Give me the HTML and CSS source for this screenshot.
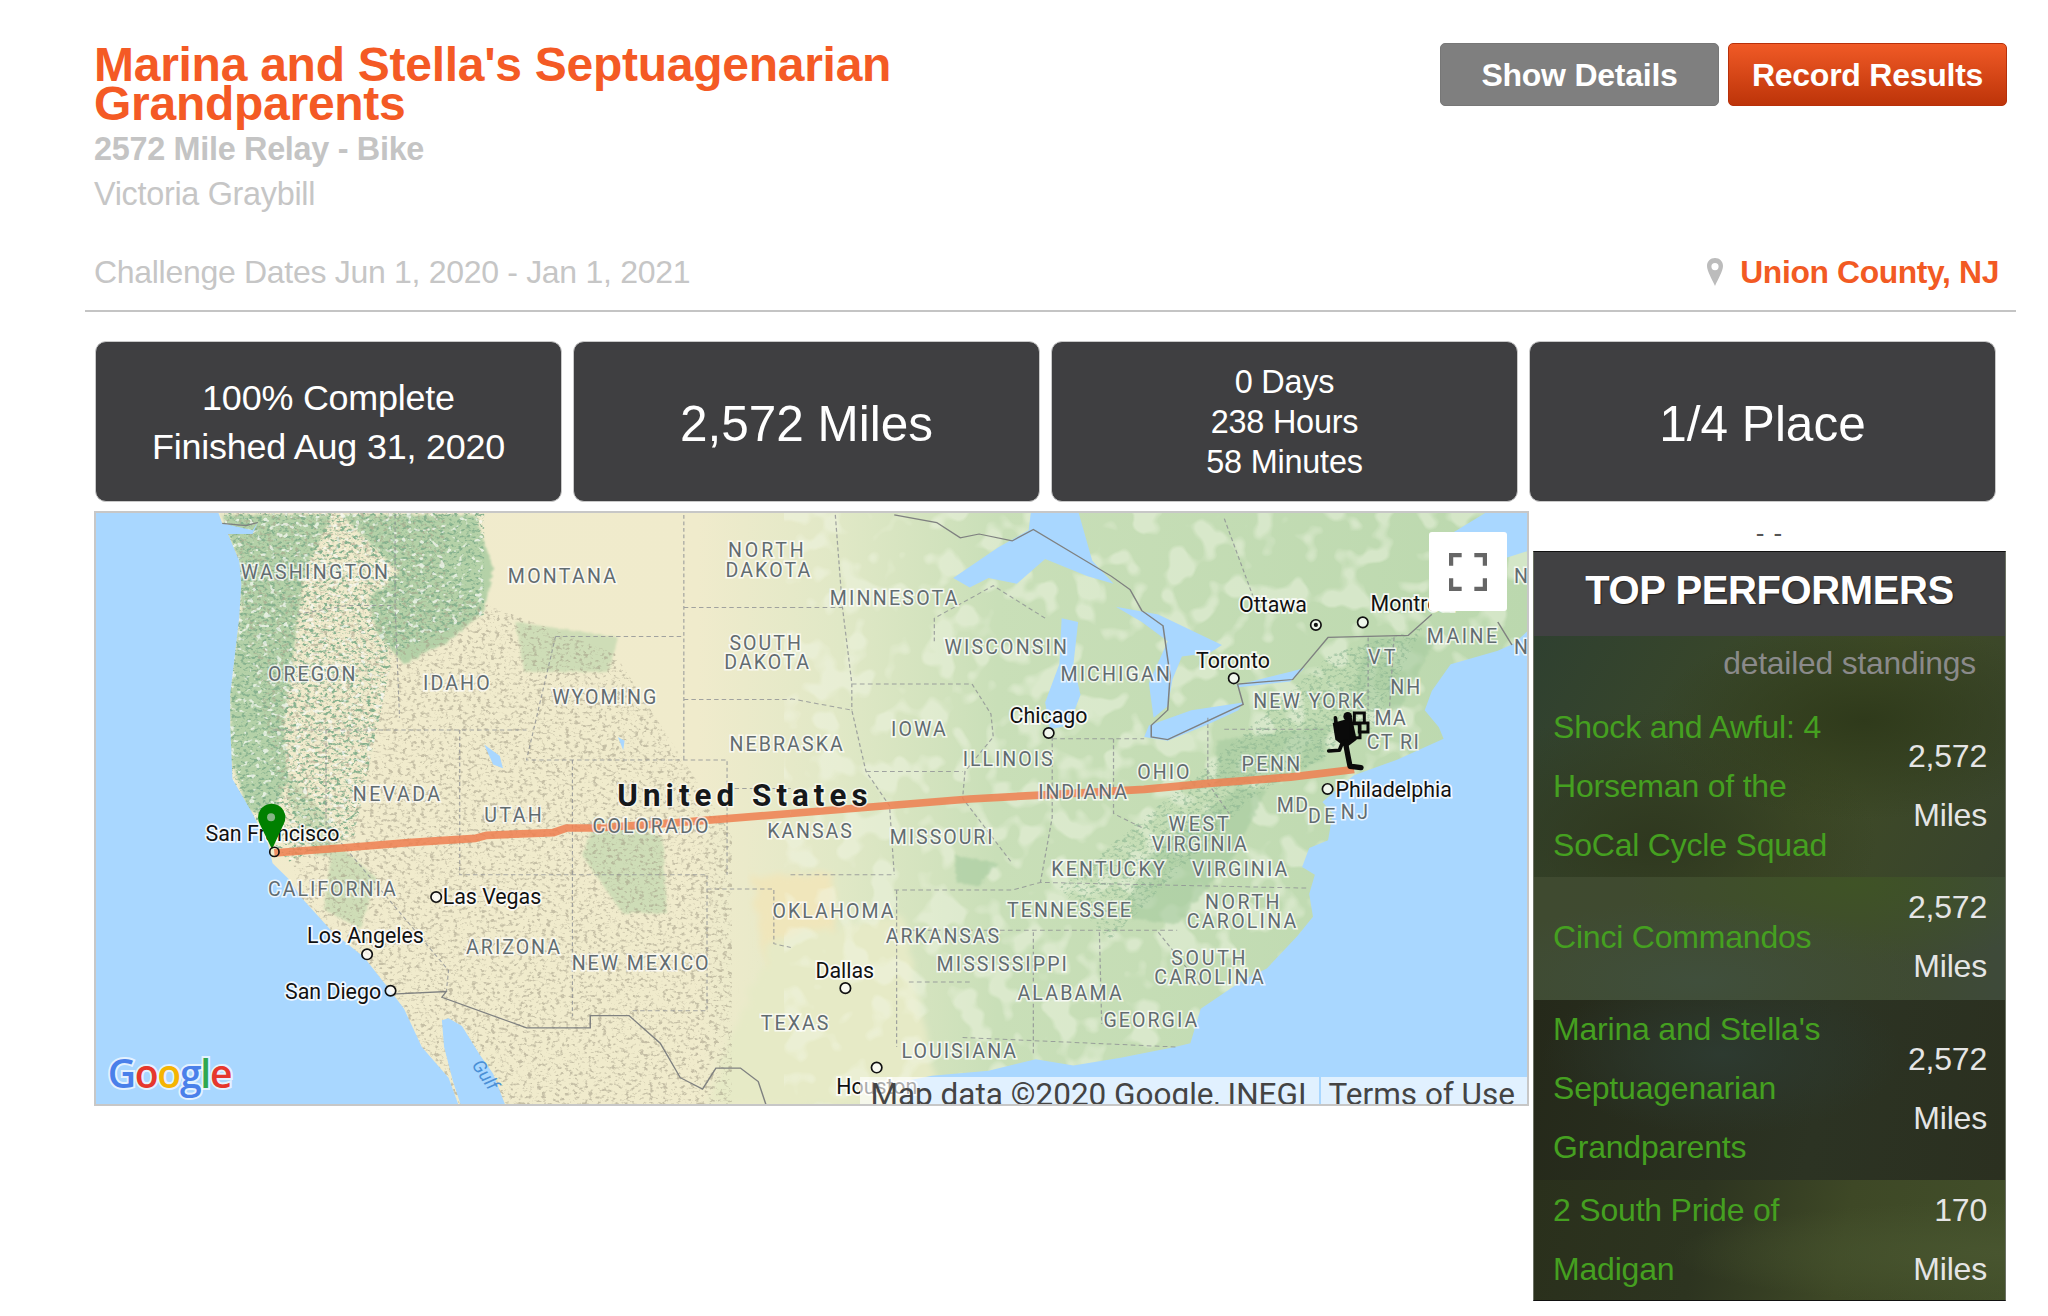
FILE: index.html
```html
<!DOCTYPE html>
<html lang="en">
<head>
<meta charset="utf-8">
<title>Marina and Stella's Septuagenarian Grandparents</title>
<link rel="stylesheet" href="styles.css">
</head>
<body>
<div class="page">
  <header class="head">
    <div class="head-text">
      <h1 class="title">Marina and Stella's Septuagenarian Grandparents</h1>
      <h2 class="subtitle">2572 Mile Relay - Bike</h2>
      <p class="captain">Victoria Graybill</p>
    </div>
    <div class="actions">
      <a class="btn btn-grey">Show Details</a>
      <a class="btn btn-orange">Record Results</a>
    </div>
  </header>
  <div class="dates">
    <span>Challenge Dates Jun 1, 2020 - Jan 1, 2021</span>
    <span class="place">
      <svg class="place-pin" viewBox="0 0 16 28" aria-hidden="true"><path fill-rule="evenodd" d="M8 0C3.4 0 0 3.5 0 8c0 5 5 13 8 20 3-7 8-15 8-20 0-4.500-3.400-8-8-8zm0 5a3.600 3.600 0 1 1 0 7.200A3.600 3.600 0 0 1 8 5z"/></svg>
      <span>Union County, NJ</span>
    </span>
  </div>
  <section class="stats">
    <div class="stat stat-m">100% Complete<br>Finished Aug 31, 2020</div>
    <div class="stat stat-l">2,572 Miles</div>
    <div class="stat stat-s">0 Days<br>238 Hours<br>58 Minutes</div>
    <div class="stat stat-l">1/4 Place</div>
  </section>
  <section class="main">
    <div class="map">
      <svg class="map-svg" viewBox="72 392 1098 454" preserveAspectRatio="none" aria-label="Route map">
        <defs>
          <linearGradient id="land" gradientUnits="userSpaceOnUse" x1="72" y1="0" x2="1170" y2="0">
            <stop offset="0" stop-color="#f1ebcd"/>
            <stop offset=".42" stop-color="#f0ebcc"/>
            <stop offset=".52" stop-color="#e0e8c6"/>
            <stop offset=".63" stop-color="#c9dfb8"/>
            <stop offset="1" stop-color="#bbd8ae"/>
          </linearGradient>
          <filter id="rough" x="-5%" y="-5%" width="110%" height="110%">
            <feTurbulence type="fractalNoise" baseFrequency=".09" numOctaves="3" seed="4" result="n"/>
            <feDisplacementMap in="SourceGraphic" in2="n" scale="12" result="d"/>
            <feGaussianBlur in="d" stdDeviation="2.500"/>
          </filter>
          <filter id="ridge" x="0" y="0" width="100%" height="100%">
            <feTurbulence type="fractalNoise" baseFrequency=".28 .4" numOctaves="3" seed="9"/>
            <feColorMatrix values="0 0 0 0 .36  0 0 0 0 .33  0 0 0 0 .24  0 0 0 -5 2.350"/>
          </filter>
          <filter id="ridge-green" x="0" y="0" width="100%" height="100%">
            <feTurbulence type="fractalNoise" baseFrequency=".3 .42" numOctaves="3" seed="12"/>
            <feColorMatrix values="0 0 0 0 .24  0 0 0 0 .44  0 0 0 0 .27  0 0 0 -5 2.450"/>
          </filter>
          <filter id="snow" x="0" y="0" width="100%" height="100%">
            <feTurbulence type="fractalNoise" baseFrequency=".2 .26" numOctaves="2" seed="31"/>
            <feColorMatrix values="0 0 0 0 .96  0 0 0 0 .97  0 0 0 0 .93  0 0 0 -9 3.500"/>
          </filter>
          <filter id="blotch" x="0" y="0" width="100%" height="100%">
            <feTurbulence type="fractalNoise" baseFrequency=".045" numOctaves="2" seed="21"/>
            <feColorMatrix values="0 0 0 0 .89  0 0 0 0 .93  0 0 0 0 .79  0 0 0 -9 4.300"/>
          </filter>
          <clipPath id="west"><path d="M170 392H340L340 450 470 500 560 640 560 846H260Z"/></clipPath>
          <clipPath id="north"><path d="M170 392H370V470L300 500 270 640 220 660 170 600Z"/></clipPath>
          <clipPath id="appal"><path d="M850 720 960 610 1050 560 1090 480 1020 500 920 590 810 680Z"/></clipPath>
        </defs>

        <rect class="land" x="72" y="392" width="1098" height="454"/>
        <path class="patch-beige" d="M575 670H640L628 790 590 770Z" filter="url(#rough)"/>
        <path class="patch-mid" d="M540 846 590 720 690 700 720 846Z" filter="url(#rough)"/>
        <rect class="blotch" x="600" y="392" width="570" height="454" filter="url(#blotch)"/>

        <g transform="translate(69 390.500) scale(.3419 .2941)">
          <g class="forest" filter="url(#rough)">
            <path d="M290 10H540L480 150 460 300 430 560 440 700 400 800 350 780 310 640 310 480 335 250 330 130Z"/>
            <path d="M560 10H860L900 150 880 260 800 340 700 400 640 320 620 230 690 160Z"/>
          </g>
          <g class="forest-light" filter="url(#rough)">
            <path d="M950 290 1180 330 1160 420 970 420Z"/>
            <path d="M1130 800 1280 850 1290 1050 1190 1050 1100 900Z"/>
            <path d="M440 690 530 800 540 900 500 900 440 760Z"/>
            <path d="M540 860 640 960 600 1090 520 1040Z"/>
          </g>
        </g>
        <g transform="translate(604.900 390.500) scale(.3618 .2941)">
          <g class="forest-east" filter="url(#rough)">
            <path d="M905 600 1140 560 1130 650 1030 700 900 720Z"/>
            <path d="M700 1060 760 900 950 720 1010 730 940 900 820 1080Z"/>
            <path d="M1225 330 1370 330 1290 520 1180 520Z"/>
            <path d="M350 900 440 920 400 980 350 970Z"/>
          </g>
        </g>
        <rect class="ridge" x="72" y="392" width="1098" height="454" clip-path="url(#west)" filter="url(#ridge)"/>
        <rect class="ridge-strong" x="72" y="392" width="1098" height="454" clip-path="url(#north)" filter="url(#ridge-green)"/>
        <rect class="ridge-snow" x="72" y="392" width="1098" height="454" clip-path="url(#north)" filter="url(#snow)"/>
        <rect class="ridge" x="72" y="392" width="1098" height="454" clip-path="url(#appal)" filter="url(#ridge-green)"/>

        <g class="water" transform="translate(69 390.500) scale(.3419 .2941)">
          <path d="M0 0H282L292 32 360 50 372 30 360 60 305 60 330 130 335 190 330 280 310 480 310 560 315 700 360 790 395 870 405 920 440 960 470 1010 540 1100 610 1165 672 1257 700 1300 740 1400 800 1480 825 1560H0Z"/>
          <path d="M785 1330 800 1325 830 1345 870 1420 900 1470 930 1560H830L810 1490 790 1400Z"/>
          <path d="M880 610 915 640 922 672 900 662Z"/>
          <path d="M1180 590 1195 600 1192 625Z"/>
        </g>
        <g class="water" transform="translate(604.900 390.500) scale(.3618 .2941)">
          <path d="M230 1560 240 1490 300 1475 420 1462 520 1432 600 1448 700 1428 815 1400 848 1390 870 1300 960 1225 1010 1195 1075 1110 1108 1060 1100 1000 1112 950 1085 930 1100 880 1140 860 1150 790 1128 760 1165 720 1195 690 1285 650 1385 595 1375 565 1345 520 1360 470 1400 400 1500 365 1535 345 1575 300V1560Z"/>
          <path d="M345 175 440 95 505 50 510 0H610L640 130 685 190 630 170 540 125 480 190 420 175 380 200Z"/>
          <path d="M575 280 610 290 600 400 615 480 590 560 550 570 540 500 570 400Z"/>
          <path d="M690 250 780 270 915 350 890 370 830 380 810 440 800 510 770 540 760 450 800 340 745 290Z"/>
          <path d="M760 560 850 520 960 500 950 520 880 560 800 600 750 590Z"/>
          <path d="M945 455 1060 420 1090 410 1060 445 950 460Z"/>
          <path d="M1400 60 1480 0H1575V100L1510 125Z"/>
        </g>

        <g class="state-lines" transform="translate(69 390.500) scale(.3419 .2941)">
          <path d="M1328 10V650M1328 252H1568M1328 492H1568M1040 328H1328M1040 328 975 650H1425V950M1425 725H1568M405 572H975M825 572V950H1380V1305H1205M1078 650V1320M1380 987H1530V1130L1568 1140M525 572V820L800 1200 795 1255M460 270 570 247H680M680 10V250L690 540"/>
        </g>
        <g class="state-lines" transform="translate(604.900 390.500) scale(.3618 .2941)">
          <path d="M95 10 110 250 130 450V520M0 252H110M130 452H385L425 530 430 590 370 680 365 750 470 920M160 680H365M0 490 130 520 160 680 210 770 220 950M0 950H220M220 990H470L530 970 1100 985M555 590V800L530 970M685 595V790L750 830M555 595H750M885 540V710L930 790M920 570H1130M240 1095H820M225 990V1400M380 1230H250M365 1375 820 1400M515 1100V1420M655 1100 660 1340M305 340V280L430 195 540 280M780 1100 870 1240M1225 330V520M1280 330 1270 520M920 20 980 220"/>
        </g>
        <g class="country-lines" transform="translate(69 390.500) scale(.3419 .2941)">
          <path d="M672 1262 795 1255 785 1270 975 1350H1118V1318H1205L1275 1390 1320 1480 1370 1510 1400 1455H1455L1495 1490 1515 1560"/>
          <path d="M292 32 345 38 372 30"/>
        </g>
        <g class="country-lines" transform="translate(604.900 390.500) scale(.3618 .2941)">
          <path d="M220 10 310 30 360 70 400 60 470 78 515 48 680 170 720 205 745 260 790 300 805 430 800 520 765 560V590L800 597 885 548 960 505 948 452 1065 440 1140 330 1310 325 1360 270M1500 290 1530 350"/>
        </g>

        <g transform="translate(69 390.500) scale(.3419 .2941)">
          <path class="route" d="M409 893 560 880 710 866 860 855 885 847 1035 840 1065 828H1130L1300 815 1568 790"/>
        </g>
        <g transform="translate(604.900 390.500) scale(.3618 .2941)">
          <path class="route" d="M0 790 150 775 380 752 560 740 750 727 880 712 1060 695 1195 675"/>
        </g>

        <g class="states">
          <text x="183" y="443" textLength="113">WASHINGTON</text>
          <text x="388" y="446" textLength="83">MONTANA</text>
          <text x="557" y="426" textLength="58">NORTH</text>
          <text x="555" y="441" textLength="65">DAKOTA</text>
          <text x="635" y="463" textLength="98">MINNESOTA</text>
          <text x="1160" y="446">N</text>
          <text x="1160" y="500">N</text>
          <text x="1093" y="492" textLength="54">MAINE</text>
          <text x="1048" y="508" textLength="21">VT</text>
          <text x="723" y="500" textLength="94">WISCONSIN</text>
          <text x="204" y="521" textLength="67">OREGON</text>
          <text x="323" y="528" textLength="51">IDAHO</text>
          <text x="422" y="539" textLength="80">WYOMING</text>
          <text x="558" y="497" textLength="55">SOUTH</text>
          <text x="554" y="512" textLength="65">DAKOTA</text>
          <text x="812" y="521" textLength="84">MICHIGAN</text>
          <text x="1065" y="531" textLength="23">NH</text>
          <text x="960" y="542" textLength="85">NEW YORK</text>
          <text x="1053" y="555" textLength="24">MA</text>
          <text x="1047" y="573" textLength="40">CT RI</text>
          <text x="682" y="563" textLength="42">IOWA</text>
          <text x="558" y="575" textLength="87">NEBRASKA</text>
          <text x="737" y="586" textLength="69">ILLINOIS</text>
          <text x="871" y="596" textLength="40">OHIO</text>
          <text x="951" y="590" textLength="45">PENN</text>
          <text x="795" y="612" textLength="68">INDIANA</text>
          <text x="269" y="613" textLength="67">NEVADA</text>
          <text x="370" y="629" textLength="44">UTAH</text>
          <text x="453" y="638" textLength="89">COLORADO</text>
          <text x="587" y="642" textLength="65">KANSAS</text>
          <text x="978" y="622" textLength="24">MD</text>
          <text x="1002" y="630" textLength="21">DE</text>
          <text x="1027" y="627" textLength="21">NJ</text>
          <text x="895" y="636" textLength="46">WEST</text>
          <text x="882" y="652" textLength="73">VIRGINIA</text>
          <text x="681" y="646" textLength="79">MISSOURI</text>
          <text x="805" y="671" textLength="87">KENTUCKY</text>
          <text x="913" y="671" textLength="73">VIRGINIA</text>
          <text x="204" y="686" textLength="98">CALIFORNIA</text>
          <text x="591" y="703" textLength="93">OKLAHOMA</text>
          <text x="771" y="702" textLength="95">TENNESSEE</text>
          <text x="923" y="696" textLength="57">NORTH</text>
          <text x="909" y="711" textLength="84">CAROLINA</text>
          <text x="678" y="722" textLength="87">ARKANSAS</text>
          <text x="356" y="731" textLength="72">ARIZONA</text>
          <text x="897" y="739" textLength="57">SOUTH</text>
          <text x="884" y="754" textLength="84">CAROLINA</text>
          <text x="437" y="743" textLength="105">NEW MEXICO</text>
          <text x="717" y="744" textLength="100">MISSISSIPPI</text>
          <text x="779" y="766" textLength="80">ALABAMA</text>
          <text x="582" y="789" textLength="52">TEXAS</text>
          <text x="845" y="787" textLength="72">GEORGIA</text>
          <text x="690" y="811" textLength="88">LOUISIANA</text>
        </g>
        <text class="country" x="472" y="617" textLength="192">United States</text>
        <text class="gulf" transform="translate(360 816) rotate(56)">Gulf</text>

        <g class="cities">
          <text x="949" y="468">Ottawa</text>
          <text x="1050" y="467">Montréal</text>
          <text x="916" y="511">Toronto</text>
          <text x="773" y="553">Chicago</text>
          <text x="1023" y="610">Philadelphia</text>
          <text x="156" y="644">San Francisco</text>
          <text x="338" y="692">Las Vegas</text>
          <text x="234" y="722">Los Angeles</text>
          <text x="217" y="765">San Diego</text>
          <text x="624" y="749">Dallas</text>
          <text x="640" y="838">Houston</text>
        </g>
        <g class="dots">
          <circle cx="1008" cy="478" r="4"/><circle class="dot-core" cx="1008" cy="478" r="1.600"/>
          <circle cx="1044" cy="476" r="4"/>
          <circle cx="945" cy="519" r="4"/>
          <circle cx="803" cy="561" r="4"/>
          <circle cx="1017" cy="604" r="4"/>
          <circle cx="333" cy="687" r="4"/>
          <circle cx="280" cy="731" r="4"/>
          <circle cx="298" cy="759" r="4"/>
          <circle cx="647" cy="757" r="4"/>
          <circle cx="671" cy="818" r="4"/>
        </g>

        <g transform="translate(68 597.200) scale(.2552)">
          <path class="pin" d="M545 208 508 132A41 41 0 1 1 580 132Z"/>
          <circle class="pin-hole" cx="542" cy="112" r="12"/>
          <circle class="sf-dot" cx="552" cy="216" r="14"/>
        </g>
        <g class="runner" transform="translate(980.100 520.700) scale(.2552)">
          <circle cx="205" cy="108" r="13"/>
          <path d="M160 128 218 112 232 178 200 202 168 178Z"/>
          <path class="runner-limb" d="M198 185 206 228 212 258 245 262"/>
          <path class="runner-limb thin" d="M190 185 180 210 148 212"/>
          <path class="runner-limb thin" d="M172 145 168 112"/>
          <path class="runner-box" d="M225 98H255V128H225ZM240 128H266V155H240ZM215 130H242V172H215Z"/>
        </g>

        <text class="google" x="81" y="834"><tspan class="g-blue">G</tspan><tspan class="g-red">o</tspan><tspan class="g-yellow">o</tspan><tspan class="g-blue">g</tspan><tspan class="g-green">l</tspan><tspan class="g-red">e</tspan></text>
      </svg>
      <button class="fullscreen" aria-label="Toggle fullscreen">
        <svg viewBox="0 0 36 36" aria-hidden="true"><path d="M2 12V2H12M24 2H34V12M34 24V34H24M12 34H2V24"/></svg>
      </button>
      <div class="attrib">
        <span class="attrib-cell">Map data ©2020 Google, INEGI</span>
        <span class="attrib-cell attrib-terms">Terms of Use</span>
      </div>
    </div>
    <aside class="side">
      <div class="dash">- -</div>
      <div class="panel">
        <h3 class="panel-title">TOP PERFORMERS</h3>
        <div class="lead">
          <a class="standings">detailed standings</a>
          <div class="row">
            <a class="team">Shock and Awful: 4 Horseman of the SoCal Cycle Squad</a>
            <span class="dist">2,572 Miles</span>
          </div>
        </div>
        <div class="row row-2">
          <a class="team">Cinci Commandos</a>
          <span class="dist">2,572 Miles</span>
        </div>
        <div class="row row-3">
          <a class="team">Marina and Stella's Septuagenarian Grandparents</a>
          <span class="dist">2,572 Miles</span>
        </div>
        <div class="row row-4">
          <a class="team">2 South Pride of Madigan</a>
          <span class="dist">170 Miles</span>
        </div>
      </div>
    </aside>
  </section>
</div>
</body>
</html>
```
FILE: styles.css
```css
* { box-sizing: border-box; }
html, body { margin: 0; padding: 0; background: #fff; }
body { font-family: "Liberation Sans", Arial, sans-serif; height: 1316px; overflow: hidden; }
.page { width: 1931px; margin-left: 85px; }

.head { display: flex; justify-content: space-between; padding-left: 9px; height: 220px; }
.head-text { width: 830px; padding-top: 45px; }
.title { margin: 0; font-size: 48px; line-height: 39px; font-weight: 700; color: #f45a25; letter-spacing: -.27px; }
.subtitle { margin: 6px 0 0; font-size: 32.400px; line-height: 40px; font-weight: 700; color: #c4c4c4; letter-spacing: -.3px; }
.captain { margin: 5px 0 0; font-size: 32.400px; line-height: 40px; color: #c6c6c6; letter-spacing: -.3px; }
.actions { display: flex; gap: 9px; padding-top: 43px; margin-right: 9px; }
.btn { display: flex; align-items: center; justify-content: center; width: 279px; height: 63px; padding-top: 2px; border-radius: 5px; color: #fff; font-size: 32px; font-weight: 700; letter-spacing: -.25px; }
.btn-grey { background: #7f7f7f; border: 1px solid #777; }
.btn-orange { background: linear-gradient(#f05a26, #bd3409); border: 1px solid #b8300a; }

.dates { display: flex; justify-content: space-between; align-items: center; height: 92px; padding: 14px 17px 0 9px; border-bottom: 2px solid #c4c4c4; color: #c6c6c6; font-size: 32px; letter-spacing: -.3px; }
.place { display: flex; align-items: center; gap: 17px; color: #f25a23; font-weight: 700; font-size: 31.800px; letter-spacing: -.35px; }
.place-pin { width: 16px; height: 28px; fill: #bcbcbc; }

.stats { display: grid; grid-template-columns: repeat(4, 467px); column-gap: 11px; margin: 29px 0 0 10px; width: 1900px; }
.stat { height: 161px; display: flex; align-items: center; justify-content: center; text-align: center; background: #3f3f41; border: 1px solid #c9c9c9; border-radius: 11px; color: #fff; }
.stat-m { font-size: 35.900px; line-height: 49px; padding-top: 2px; letter-spacing: -.2px; }
.stat-l { font-size: 49.500px; padding-top: 3px; }
.stat-s { font-size: 32.400px; line-height: 40px; padding-top: 1px; letter-spacing: -.2px; }

.main { display: flex; align-items: flex-start; margin: 9px 0 0 9px; }
.map { position: relative; width: 1435px; height: 595px; flex: none; border: 2px solid #c7c7c7; overflow: hidden; background: #aad6ff; }
.map-svg { display: block; width: 100%; height: 100%; }

.land { fill: url(#land); }
.patch-beige { fill: #f0e6bb; }
.patch-mid { fill: #e6eac6; }
.blotch { opacity: .45; }
.forest { opacity: .8; }
.forest path { fill: #a6cb9f; }
.forest-east { opacity: .6; }
.forest-east path { fill: #a6cb9f; }
.forest-light { opacity: .55; }
.forest-light path { fill: #b4d2a6; }
.ridge { opacity: .55; }
.ridge-strong { opacity: 1; }
.ridge-snow { opacity: .7; }
.water { fill: #a9d7ff; }
.state-lines path { fill: none; stroke: #8d9093; stroke-width: 2.600; stroke-dasharray: 10 7; opacity: .8; }
.country-lines path { fill: none; stroke: #7f8180; stroke-width: 3.200; }
.route { fill: none; stroke: #ef7f50; stroke-opacity: .85; stroke-width: 20; stroke-linejoin: round; }

.states text { font-family: Roboto, sans-serif; font-size: 15px; fill: #626c70; stroke: #fff; stroke-opacity: .75; stroke-width: 2.400px; paint-order: stroke; }
.country { font-family: Roboto, sans-serif; font-weight: 700; font-size: 24px; fill: #16181a; stroke: #fff; stroke-opacity: .7; stroke-width: 2.400px; paint-order: stroke; }
.gulf { font-family: Roboto, sans-serif; font-size: 14px; font-style: italic; fill: #4a8fd6; }
.cities text { font-family: Roboto, sans-serif; font-size: 16.400px; fill: #111; stroke: #fff; stroke-opacity: .85; stroke-width: 2.600px; paint-order: stroke; }
.dots circle { fill: #fff; fill-opacity: .75; stroke: #111; stroke-width: 1.300px; }
.dots .dot-core { fill: #111; fill-opacity: 1; stroke: none; }

.pin { fill: #008000; }
.pin-hole { fill: #86b586; }
.sf-dot { fill: none; stroke: #111; stroke-width: 5; }
.runner { fill: #0a0a0a; }
.runner-limb { fill: none; stroke: #0a0a0a; stroke-width: 16; stroke-linejoin: round; stroke-linecap: round; }
.runner-limb.thin { stroke-width: 11; }
.runner-box { fill: none; stroke: #0a0a0a; stroke-width: 9; }

.google { font-family: "Open Sans", Roboto, sans-serif; font-size: 30px; font-weight: 600; letter-spacing: -1px; stroke: #fff; stroke-opacity: .7; stroke-width: 3px; paint-order: stroke; }
.g-blue { fill: #4a80ea; }
.g-red { fill: #e6372d; }
.g-yellow { fill: #f5b400; }
.g-green { fill: #2fa84f; }

.fullscreen { position: absolute; left: 1333px; top: 19px; width: 78px; height: 79px; padding: 0; border: 0; border-radius: 3px; background: #fff; display: flex; align-items: center; justify-content: center; }
.fullscreen svg { width: 38px; height: 38px; fill: none; stroke: #666; stroke-width: 4; }
.attrib { position: absolute; right: 0; bottom: 0; display: flex; gap: 2px; height: 27px; overflow: hidden; font-family: Roboto, sans-serif; font-size: 31.500px; line-height: 36px; color: #444; }
.attrib-cell { background: rgba(255, 255, 255, .65); padding: 0 12px 0 10px; white-space: nowrap; }
.attrib-terms { padding: 0 12px 0 8px; }

.side { width: 473px; margin-left: 4px; }
.dash { height: 40px; padding-top: 7px; text-align: center; color: #555; font-size: 26px; line-height: 30px; letter-spacing: 1px; }
.panel { border: 1px solid #6c7264; border-top-color: #111; border-bottom-color: #111; height: 750px; overflow: hidden; }
.panel-title { margin: 0; height: 84px; background: #414143; color: #fff; text-align: center; font-size: 40px; line-height: 76px; font-weight: 700; letter-spacing: -.4px; text-shadow: 1px 1px 1px #222; }
.lead { height: 241px; background:
  radial-gradient(ellipse at 70% 35%, #2f3a1b 0, rgba(47,58,27,0) 45%),
  radial-gradient(ellipse at 25% 85%, #2f381f 0, rgba(47,56,31,0) 45%),
  linear-gradient(120deg, #2f4030, #3f4b26 60%, #38432d); }
.standings { display: block; height: 62px; padding-right: 29px; text-align: right; color: #8a8a8a; font-size: 31.800px; line-height: 54px; letter-spacing: -.2px; }
.row { display: flex; align-items: center; justify-content: space-between; padding: 0 18px 0 19px; font-size: 32px; line-height: 58.800px; letter-spacing: -.2px; }
.row-2, .row-3, .row-4 { padding-bottom: 3px; }
.team { width: 300px; color: #45a020; }
.dist { width: 120px; text-align: right; color: #e5e5e5; }
.row-2 { height: 123px; background:
  radial-gradient(ellipse at 35% 85%, #404f3c 0, rgba(64,79,60,0) 55%),
  radial-gradient(ellipse at 68% 5%, #3f5326 0, rgba(63,83,38,0) 50%),
  linear-gradient(90deg, #3f4a30, #3f4a2e 70%, #3e4a3a); }
.row-3 { height: 180px; background:
  radial-gradient(ellipse at 40% 30%, #2d3a30 0, rgba(45,58,48,0) 45%),
  linear-gradient(100deg, #25291a, #2c3323 60%, #2b3020); }
.row-4 { height: 122px; background:
  radial-gradient(ellipse at 100% 60%, #48552f 0, rgba(72,85,47,0) 50%),
  linear-gradient(100deg, #2a301c, #2d3420 35%, #3e4826 65%, #424f2a); }
```
